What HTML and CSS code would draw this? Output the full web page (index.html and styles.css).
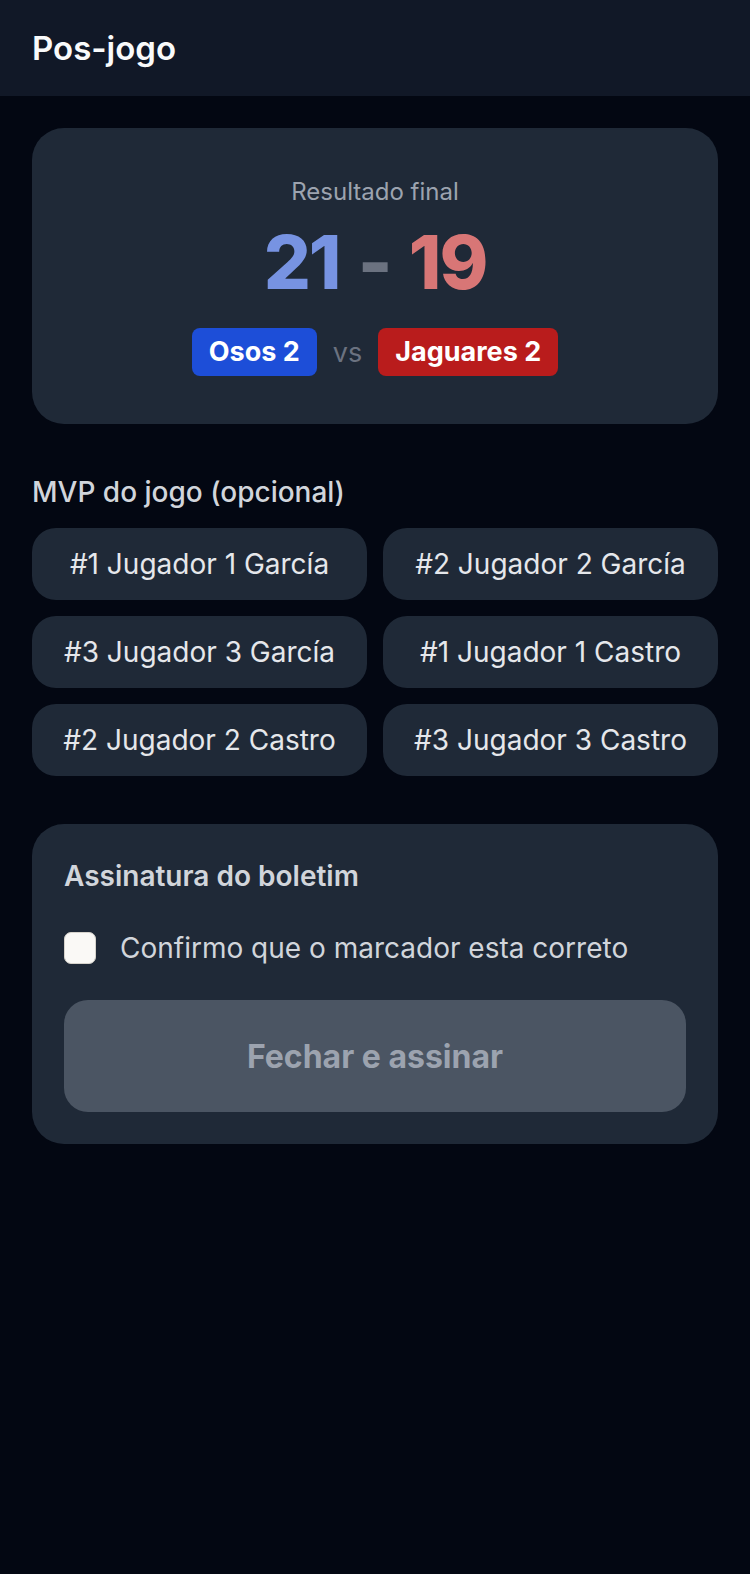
FILE: index.html
```html
<!DOCTYPE html>
<html lang="pt">
  <head>
    <meta charset="utf-8">
    <title>Pos-jogo</title>
    <link rel="stylesheet" href="styles.css">
  </head>
  <body>
    <header class="TopBar">
      <h1 class="PageTitle">Pos-jogo</h1>
    </header>
    <main class="Content">
      <section class="ScoreCard">
        <div class="ScoreLabel">Resultado final</div>
        <div class="Score">
          <span class="ScoreHome">21</span>
          <span class="ScoreDash">-</span>
          <span class="ScoreAway">19</span>
        </div>
        <div class="Teams">
          <span class="TeamBadge TeamHome">Osos 2</span>
          <span class="Versus">vs</span>
          <span class="TeamBadge TeamAway">Jaguares 2</span>
        </div>
      </section>

      <section class="MvpSection">
        <h2 class="SectionTitle">MVP do jogo (opcional)</h2>
        <div class="PlayerGrid">
          <button class="PlayerBtn">#1 Jugador 1 García</button>
          <button class="PlayerBtn">#2 Jugador 2 García</button>
          <button class="PlayerBtn">#3 Jugador 3 García</button>
          <button class="PlayerBtn">#1 Jugador 1 Castro</button>
          <button class="PlayerBtn">#2 Jugador 2 Castro</button>
          <button class="PlayerBtn">#3 Jugador 3 Castro</button>
        </div>
      </section>

      <section class="SignCard">
        <h2 class="SignTitle">Assinatura do boletim</h2>
        <label class="ConfirmRow">
          <span class="CheckBox"></span>
          <span class="ConfirmText">Confirmo que o marcador esta correto</span>
        </label>
        <button class="SignBtn" disabled>Fechar e assinar</button>
      </section>
    </main>
  </body>
</html>
```

FILE: styles.css
```css
* {
  margin: 0;
  padding: 0;
  box-sizing: border-box;
}

body {
  background: #030712;
  font-family: Inter, "Noto Sans", sans-serif;
  color: #d1d5db;
  min-height: 1574px;
}

.TopBar {
  height: 96px;
  background: #111827;
  padding: 0 32px;
  display: flex;
  align-items: center;
}

.PageTitle {
  font-size: 33px;
  line-height: 48px;
  font-weight: 600;
  color: #f9fafb;
}

.Content {
  padding: 32px;
}

.ScoreCard {
  background: #1f2937;
  border-radius: 32px;
  padding: 48px 32px;
  text-align: center;
}

.ScoreLabel {
  font-size: 24px;
  line-height: 32px;
  color: #9ca3af;
}

.Score {
  margin-top: 14px;
  font-size: 74px;
  line-height: 80px;
  font-weight: 800;
  letter-spacing: -2px;
}

.ScoreHome {
  color: #7793e2;
}

.ScoreDash {
  color: #6b7280;
  margin: 0 4px;
}

.ScoreAway {
  color: #d87676;
}

.Teams {
  margin-top: 26px;
  display: flex;
  justify-content: center;
  align-items: center;
  gap: 16px;
}

.TeamBadge {
  font-size: 27px;
  line-height: 40px;
  font-weight: 700;
  color: #fff;
  padding: 4px 17px;
  border-radius: 8px;
}

.TeamHome {
  background: #1d4ed8;
}

.TeamAway {
  background: #b91c1c;
}

.Versus {
  font-size: 27px;
  color: #6b7280;
}

.MvpSection {
  margin-top: 48px;
}

.SectionTitle {
  font-size: 28px;
  line-height: 40px;
  font-weight: 500;
  color: #d1d5db;
  margin-bottom: 16px;
}

.PlayerGrid {
  display: grid;
  grid-template-columns: 1fr 1fr;
  gap: 16px;
}

.PlayerBtn {
  height: 72px;
  background: #1f2937;
  border: none;
  border-radius: 24px;
  font-family: inherit;
  font-size: 28px;
  color: #e5e7eb;
}

.SignCard {
  margin-top: 48px;
  background: #1f2937;
  border-radius: 32px;
  padding: 32px;
}

.SignTitle {
  font-size: 28px;
  line-height: 40px;
  font-weight: 600;
  color: #d1d5db;
}

.ConfirmRow {
  margin-top: 32px;
  display: flex;
  align-items: center;
  gap: 24px;
}

.CheckBox {
  width: 32px;
  height: 32px;
  border-radius: 7px;
  background: #faf9f6;
  border: 1px solid #d6d3cc;
}

.ConfirmText {
  font-size: 28px;
  line-height: 40px;
  color: #d1d5db;
}

.SignBtn {
  margin-top: 32px;
  width: 100%;
  height: 112px;
  background: #4b5563;
  border: none;
  border-radius: 24px;
  font-family: inherit;
  font-size: 32px;
  font-weight: 700;
  color: #9ca3af;
}
```
